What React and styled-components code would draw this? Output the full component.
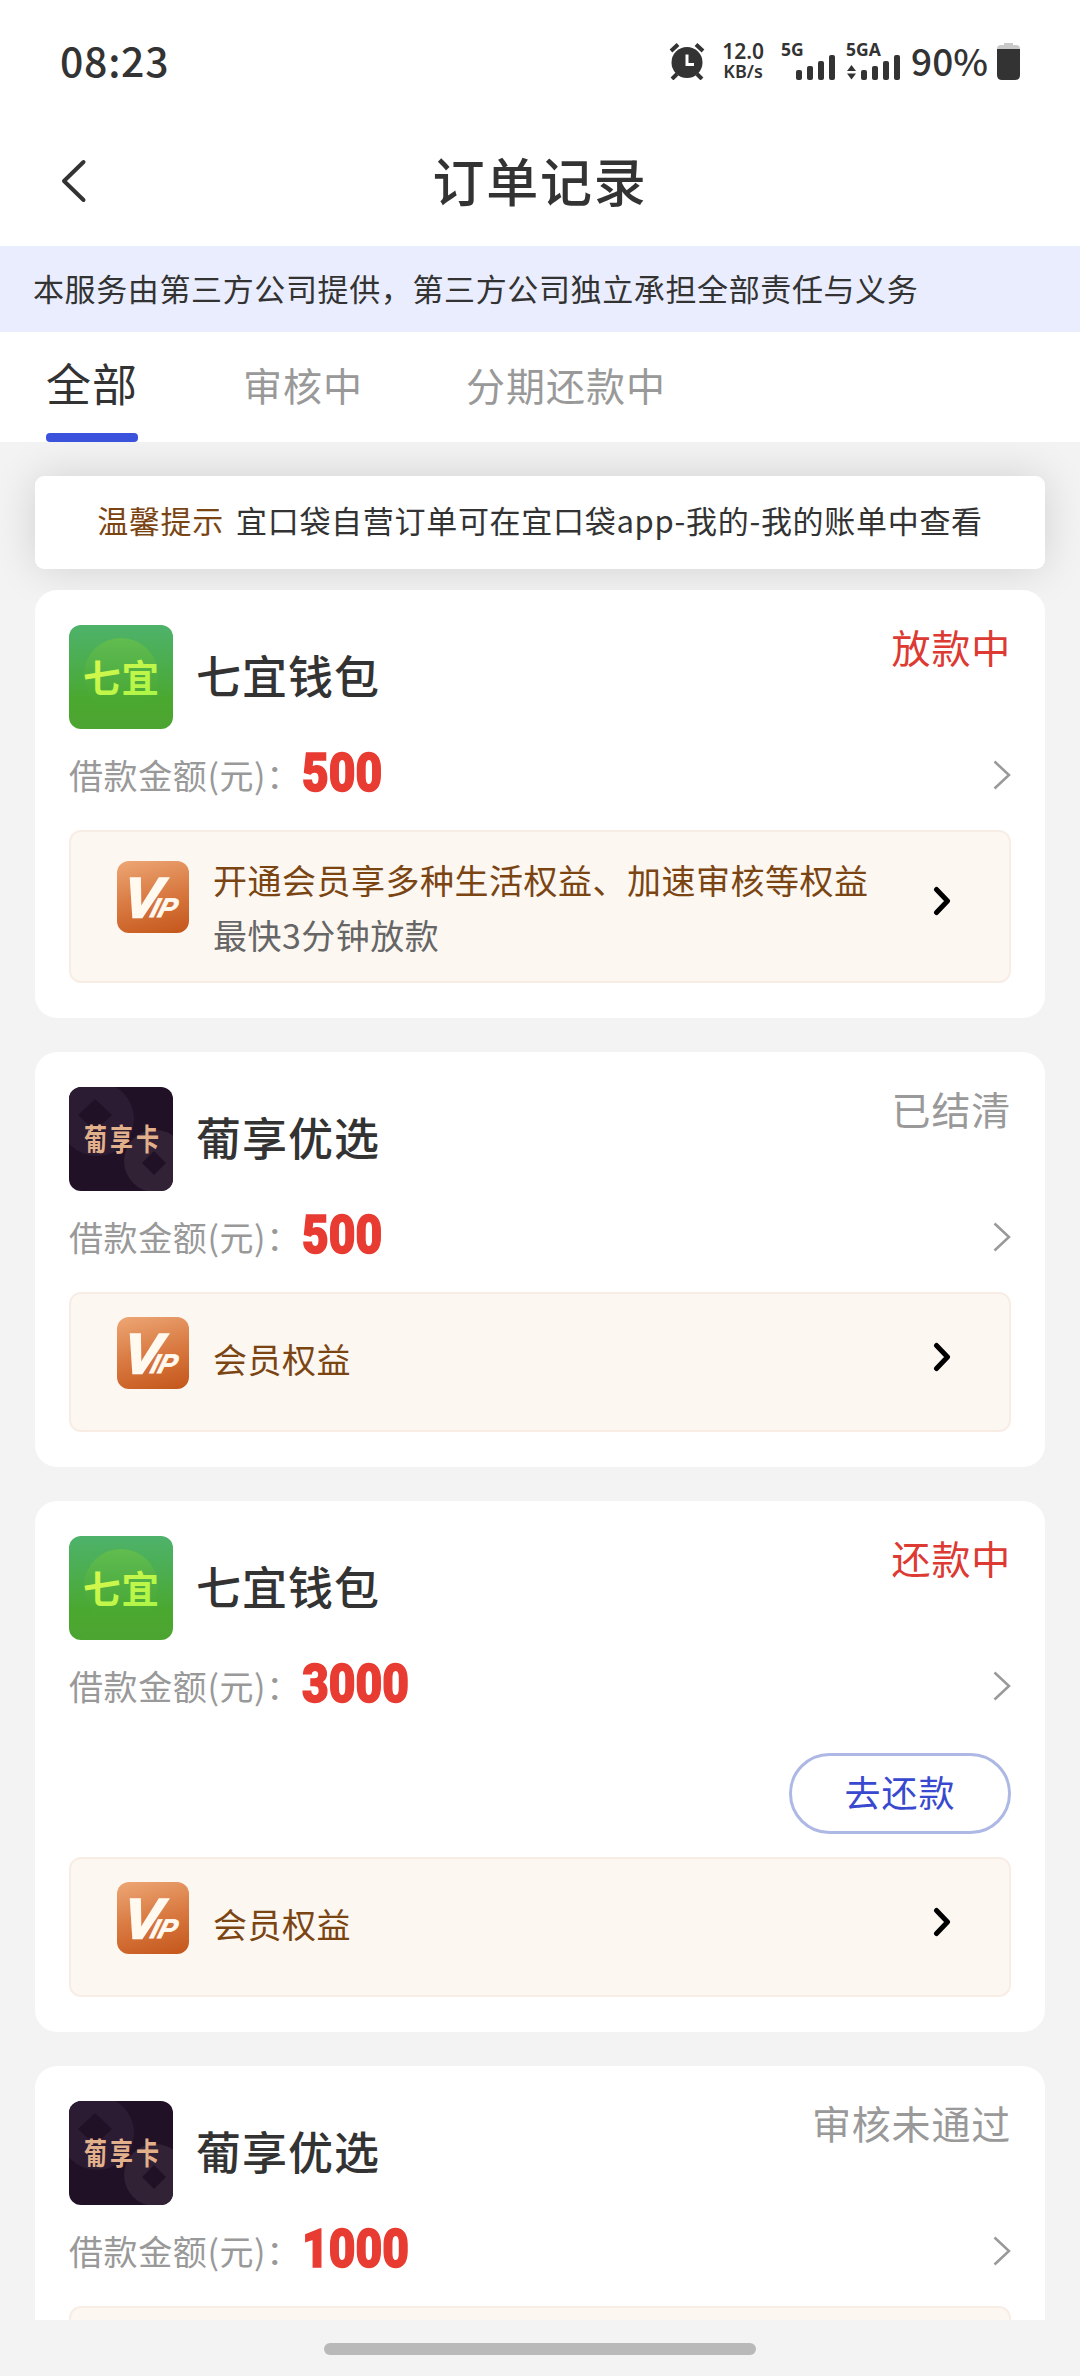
import styled, { createGlobalStyle } from "styled-components";

const GlobalStyle = createGlobalStyle`
  * {
    box-sizing: border-box;
  }

  body {
    margin: 0;
    background: #f3f3f3;
    color: #333;
    font-family: "Noto Sans CJK SC", sans-serif;
  }
`;

const Page = styled.div`
  width: 1080px;
  height: 2376px;
  display: flex;
  flex-direction: column;
  overflow: hidden;
  background: #f3f3f3;
`;

const Top = styled.header`
  position: relative;
  z-index: 1;
  flex: none;
  background: white;
`;

const StatusBar = styled.div`
  height: 122px;
  padding: 0 60px;
  display: flex;
  justify-content: space-between;
  align-items: center;
`;

const Clock = styled.div`
  margin-bottom: 5px;
  font-size: 41px;
  font-weight: 500;
  line-height: 60px;
  letter-spacing: 0.7px;
`;

const StatusIcons = styled.div`
  display: flex;
  align-items: center;
`;

const Speed = styled.div`
  width: 46px;
  margin: 0 15px 0 15px;
  display: flex;
  flex-direction: column;
  align-items: center;
  font-family: "Noto Sans", sans-serif;
  font-size: 21px;
  font-weight: 600;
  line-height: 20px;

  & small {
    font-size: 18px;
  }
`;

const SignalIcon = styled.svg`
  width: 54px;
  height: 38px;
  margin-right: 11px;
  overflow: visible;
`;

const Battery = styled.div`
  margin: 0 9px 3px 0;
  font-size: 37px;
  font-weight: 500;
  line-height: 50px;
`;

const NavBar = styled.div`
  height: 124px;
  padding: 0 60px 6px;
  display: grid;
  grid-template-columns: 30px 1fr 30px;
  align-items: center;
`;

const Title = styled.h1`
  margin: 0 0 2px;
  text-align: center;
  font-size: 52px;
  font-weight: 500;
  line-height: 66px;
  letter-spacing: 1.8px;
`;

const Notice = styled.div`
  height: 86px;
  padding-left: 33px;
  background: #eaedfd;
  font-size: 31px;
  line-height: 84px;
  letter-spacing: 0.62px;
  white-space: nowrap;
`;

const Tabs = styled.nav`
  height: 110px;
  padding-left: 46px;
  display: flex;
  background: white;
`;

const Tab = styled.div`
  margin-right: ${(props) => props.$gap || 0}px;
  height: 110px;
  display: flex;
  flex-direction: column;
  justify-content: space-between;
  font-size: ${(props) => (props.$active ? 45 : 39)}px;
  color: ${(props) => (props.$active ? "#333" : "#999")};
  line-height: ${(props) => (props.$active ? 101 : 105)}px;
  letter-spacing: 1px;
  white-space: nowrap;

  &::after {
    content: "";
    height: ${(props) => (props.$active ? 9 : 0)}px;
    border-radius: 4px;
    background: #3a52dc;
  }
`;

const List = styled.main`
  height: 1878px;
  flex: none;
  padding: 34px 35px 0;
  overflow: hidden;
`;

const Tip = styled.div`
  height: 93px;
  margin-bottom: 21px;
  display: flex;
  justify-content: center;
  gap: 12px;
  border-radius: 9px;
  background: white;
  box-shadow: 0 0 44px rgba(0, 0, 0, 0.14);
  font-size: 31px;
  line-height: 87px;
  letter-spacing: 0.7px;
  white-space: nowrap;

  & b {
    color: #7b4513;
    font-weight: 400;
  }
`;

const Card = styled.section`
  margin-bottom: 34px;
  padding: 35px 34px;
  border-radius: 22px;
  background: white;
  position: relative;
`;

const CardHead = styled.div`
  height: 104px;
  display: flex;
`;

const Name = styled.h2`
  flex: 1;
  margin: 0 0 0 23px;
  font-size: 45px;
  font-weight: 500;
  line-height: 99px;
  letter-spacing: 1px;
`;

const State = styled.div`
  font-size: 39px;
  line-height: 42px;
  letter-spacing: 0.8px;
  color: ${(props) => (props.$active ? "#dc3a32" : "#999")};
`;

const AmountRow = styled.div`
  height: 74px;
  margin-top: 9px;
  display: flex;
  align-items: center;
`;

const Label = styled.span`
  font-size: 34px;
  line-height: 70px;
  letter-spacing: 0.6px;
  color: #999;
`;

const Amount = styled.span`
  flex: 1;
  margin-left: 1px;
  font-family: Roboto, sans-serif;
  font-size: 53px;
  font-weight: 900;
  line-height: 64px;
  color: #e83b32;
  -webkit-text-stroke: 1.5px #e83b32;
  transform: translateY(-2px) scaleX(0.87);
  transform-origin: left;
`;

const ButtonRow = styled.div`
  display: flex;
  justify-content: flex-end;
  padding: 30px 0 5px;
`;

const PayButton = styled.button`
  width: 222px;
  height: 81px;
  padding: 0 0 5px;
  border: 3px solid #adb8e5;
  border-radius: 41px;
  background: white;
  color: #3949cf;
  font-family: inherit;
  font-size: 36px;
  line-height: 68px;
  letter-spacing: 1px;
`;

const Banner = styled.div`
  height: ${(props) => (props.$tall ? 153 : 140)}px;
  margin-top: 18px;
  padding: ${(props) => (props.$tall ? 29 : 23)}px 58px 0 46px;
  display: flex;
  align-items: flex-start;
  border: 2px solid #f8ede5;
  border-radius: 12px;
  background: #fdf7f1;
`;

const BannerText = styled.div`
  flex: 1;
  margin: ${(props) => (props.$tall ? -9 : 14)}px 0 0 24px;
  font-size: 34px;
  line-height: 55px;
  letter-spacing: 0.5px;
  white-space: nowrap;
  color: #7b4513;

  & p {
    margin: 0;
    color: #666;
  }
`;

const Logo = styled.svg`
  flex: none;
  width: 104px;
  height: 104px;
  border-radius: 12px;
  background: ${(props) => props.$bg};
`;

const VipBadge = styled.svg`
  flex: none;
  width: 72px;
  height: 72px;
  overflow: visible;
  border-radius: 12px;
  background: linear-gradient(165deg, #eda775 0%, #d97a42 50%, #c4561a 100%);
`;

const BannerArrow = styled.svg`
  flex: none;
  margin-top: 25px;
`;

const HomeArea = styled.footer`
  height: 56px;
  flex: none;
  display: flex;
  justify-content: center;
  padding-top: 23px;
`;

const HomeBar = styled.div`
  width: 432px;
  height: 12px;
  border-radius: 6px;
  background: #b9b9b9;
`;

function Alarm() {
  return (
    <svg width="36" height="38" viewBox="0 0 36 38" fill="none" stroke="#333">
      <circle cx="18" cy="20.500" r="15.500" fill="#333" stroke="none" />
      <path d="M2 9L9 2.500M34 9L27 2.500M8 32L3 37M28 32L33 37" strokeWidth="4" />
      <path d="M18 12.500V22.500H25" stroke="white" strokeWidth="3" />
    </svg>
  );
}

function Signal({ label, arrows }) {
  return (
    <SignalIcon viewBox="0 0 54 38" fill="#333">
      <text x="0" y="14" fontFamily="Noto Sans" fontSize="17.500" fontWeight="700">
        {label}
      </text>
      {arrows && <path d="M1 29L5.500 23L10 29ZM1 31.500H10L5.500 37.500Z" />}
      <rect x="15" y="28" width="6" height="10" rx="2" />
      <rect x="26" y="24" width="6" height="14" rx="2" />
      <rect x="37" y="19" width="6" height="19" rx="2" />
      <rect x="48" y="13" width="6" height="25" rx="2" />
    </SignalIcon>
  );
}

function BatteryIcon() {
  return (
    <svg width="23" height="37" viewBox="0 0 23 37">
      <path d="M7 0H16V2H19Q23 2 23 6V10H0V6Q0 2 4 2H7Z" fill="#c9c9c9" />
      <path d="M0 6H23V32Q23 37 18 37H5Q0 37 0 32Z" fill="#333" />
    </svg>
  );
}

function Back() {
  return (
    <svg width="28" height="46" viewBox="0 0 28 46" fill="none">
      <path
        d="M23.500 4L4 23L23.500 42"
        stroke="#333"
        strokeWidth="4"
        strokeLinecap="round"
        strokeLinejoin="round"
      />
    </svg>
  );
}

function QiyiLogo() {
  return (
    <Logo
      viewBox="0 0 104 104"
      $bg="linear-gradient(#4eb26b 0%, #4bad4b 40%, #4aa82f 72%, #4da431 100%)"
    >
      <defs>
        <linearGradient id="disc" x1="0" y1="0" x2="0" y2="1">
          <stop offset="0" stopColor="#62bd4e" />
          <stop offset="1" stopColor="#4aa82f" stopOpacity="0" />
        </linearGradient>
        <linearGradient id="lime" x1="0" y1="0" x2="1" y2="1">
          <stop offset="0" stopColor="#e3f84f" />
          <stop offset="1" stopColor="#a5f545" />
        </linearGradient>
      </defs>
      <circle cx="52" cy="50" r="37" fill="url(#disc)" />
      <text
        x="14"
        y="67"
        fontFamily="Noto Sans CJK SC"
        fontSize="37.500"
        fontWeight="700"
        letterSpacing="1"
        fill="url(#lime)"
      >
        七宜
      </text>
    </Logo>
  );
}

function PuxiangLogo() {
  return (
    <Logo viewBox="0 0 104 104" $bg="#211126">
      <circle cx="28" cy="32" r="37" fill="#2c1c33" />
      <circle cx="86" cy="74" r="31" fill="#322236" />
      <path d="M26 12L43 28L26 44L9 28Z" fill="#211126" />
      <path d="M85 64L97 76L85 88L73 76Z" fill="#211126" />
      <text
        transform="translate(15 63) scale(1 1.3)"
        fontFamily="Noto Sans CJK SC"
        fontSize="23"
        fontWeight="700"
        letterSpacing="3"
        fill="#e3b08c"
      >
        葡享卡
      </text>
    </Logo>
  );
}

function Vip() {
  return (
    <VipBadge viewBox="0 0 72 72" fill="#fff9f0" fontFamily="Liberation Sans" fontWeight="700">
      <text
        transform="translate(2 56) skewX(-17)"
        fontSize="56"
        stroke="#fff9f0"
        strokeWidth="2.500"
      >
        V
      </text>
      <text
        transform="translate(32 56) skewX(-16)"
        fontSize="27"
        fontStyle="italic"
        stroke="#fff9f0"
        strokeWidth="0.800"
      >
        IP
      </text>
    </VipBadge>
  );
}

const orders = [
  { name: "七宜钱包", logo: <QiyiLogo />, amount: "500", state: "放款中", active: true, promo: true },
  { name: "葡享优选", logo: <PuxiangLogo />, amount: "500", state: "已结清" },
  { name: "七宜钱包", logo: <QiyiLogo />, amount: "3000", state: "还款中", active: true, payable: true },
  { name: "葡享优选", logo: <PuxiangLogo />, amount: "1000", state: "审核未通过" },
];

function Order({ order }) {
  return (
    <Card>
      <CardHead>
        {order.logo}
        <Name>{order.name}</Name>
        <State $active={order.active}>{order.state}</State>
      </CardHead>
      <AmountRow>
        <Label>借款金额(元)：</Label>
        <Amount>{order.amount}</Amount>
        <svg width="18" height="30" viewBox="0 0 18 30" fill="none">
          <path d="M1.500 1.500L16 15L1.500 28.500" stroke="#999" strokeWidth="2.500" />
        </svg>
      </AmountRow>
      {order.payable && (
        <ButtonRow>
          <PayButton>去还款</PayButton>
        </ButtonRow>
      )}
      <Banner $tall={order.promo}>
        <Vip />
        <BannerText $tall={order.promo}>
          {order.promo ? "开通会员享多种生活权益、加速审核等权益" : "会员权益"}
          {order.promo && <p>最快3分钟放款</p>}
        </BannerText>
        <BannerArrow width="18" height="30" viewBox="0 0 18 30" fill="none">
          <path
            d="M3.500 3.500L14.500 15L3.500 26.500"
            stroke="black"
            strokeWidth="5"
            strokeLinecap="round"
            strokeLinejoin="round"
          />
        </BannerArrow>
      </Banner>
    </Card>
  );
}

export default function App() {
  return (
    <Page>
      <GlobalStyle />
      <Top>
        <StatusBar>
          <Clock>08:23</Clock>
          <StatusIcons>
            <Alarm />
            <Speed>
              12.0
              <small>KB/s</small>
            </Speed>
            <Signal label="5G" />
            <Signal label="5GA" arrows />
            <Battery>90%</Battery>
            <BatteryIcon />
          </StatusIcons>
        </StatusBar>
        <NavBar>
          <Back />
          <Title>订单记录</Title>
        </NavBar>
        <Notice>本服务由第三方公司提供，第三方公司独立承担全部责任与义务</Notice>
        <Tabs>
          <Tab $active $gap={105}>全部</Tab>
          <Tab $gap={103}>审核中</Tab>
          <Tab>分期还款中</Tab>
        </Tabs>
      </Top>
      <List>
        <Tip>
          <b>温馨提示</b>
          宜口袋自营订单可在宜口袋app-我的-我的账单中查看
        </Tip>
        {orders.map((order, i) => (
          <Order key={i} order={order} />
        ))}
      </List>
      <HomeArea>
        <HomeBar />
      </HomeArea>
    </Page>
  );
}
